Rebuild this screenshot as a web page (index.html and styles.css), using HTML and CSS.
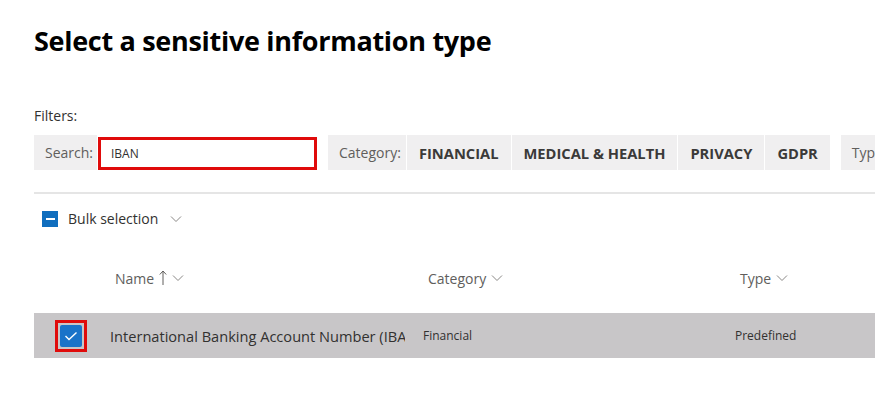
FILE: index.html
```html
<!DOCTYPE html>
<html lang="en">
<head>
    <meta charset="UTF-8">
    <meta name="viewport" content="width=device-width, initial-scale=1.0">
    <title>Select a sensitive information type</title>
    <link rel="stylesheet" href="styles.css">
</head>
<body>
    <div class="container">
        <h1>Select a sensitive information type</h1>

        <div class="filters-label">Filters:</div>
        <div class="filter-bar">
            <div class="filter-group">
                <span class="filter-name search-name">Search:</span>
                <div class="search-box">IBAN</div>
            </div>
            <div class="filter-group">
                <span class="filter-name">Category:</span>
                <span class="chip">FINANCIAL</span>
                <span class="chip">MEDICAL &amp; HEALTH</span>
                <span class="chip">PRIVACY</span>
                <span class="chip">GDPR</span>
            </div>
            <div class="filter-group">
                <span class="filter-name">Type:</span>
            </div>
        </div>

        <div class="bulk">
            <span class="check partial"></span>
            <span>Bulk selection</span>
            <svg class="chev" width="12" height="8" viewBox="0 0 12 8"><path d="M1 1.5 L6 6.5 L11 1.5" fill="none" stroke="#8a8886" stroke-width="1"/></svg>
        </div>

        <div class="grid head">
            <div></div>
            <div class="col">Name
                <svg class="arrow" width="8" height="16" viewBox="0 0 8 16"><path d="M4 1 V15 M0.8 4.5 L4 1 L7.2 4.5" fill="none" stroke="#605e5c" stroke-width="1"/></svg>
                <svg class="chev" width="12" height="8" viewBox="0 0 12 8"><path d="M1 1.5 L6 6.5 L11 1.5" fill="none" stroke="#8a8886" stroke-width="1"/></svg>
            </div>
            <div class="col">Category
                <svg class="chev" width="12" height="8" viewBox="0 0 12 8"><path d="M1 1.5 L6 6.5 L11 1.5" fill="none" stroke="#8a8886" stroke-width="1"/></svg>
            </div>
            <div class="col">Type
                <svg class="chev" width="12" height="8" viewBox="0 0 12 8"><path d="M1 1.5 L6 6.5 L11 1.5" fill="none" stroke="#8a8886" stroke-width="1"/></svg>
            </div>
        </div>

        <div class="grid row selected">
            <div class="check-cell">
                <span class="highlight">
                    <span class="check on">
                        <svg width="14" height="10" viewBox="0 0 14 10"><path d="M1.5 5 L5 8.5 L12.5 1.5" fill="none" stroke="#fff" stroke-width="1.4"/></svg>
                    </span>
                </span>
            </div>
            <div class="name">International Banking Account Number (IBAN)</div>
            <div class="small">Financial</div>
            <div class="small">Predefined</div>
        </div>
    </div>
</body>
</html>
```

FILE: styles.css
```css
body {
    margin: 0;
    font-family: 'Open Sans', 'Noto Sans', sans-serif;
    color: #323130;
    background: #fff;
    overflow: hidden;
}

.container {
    padding: 22px 0 0 34px;
}

h1 {
    margin: 0;
    font-size: 27px;
    font-weight: 700;
    color: #000;
    letter-spacing: -0.3px;
    line-height: 38px;
}

.filters-label {
    margin-top: 46px;
    font-size: 14px;
    line-height: 20px;
}

.filter-bar {
    display: flex;
    gap: 11px;
    margin-top: 9px;
    height: 35px;
    padding-bottom: 22px;
    border-bottom: 2px solid #e5e5e5;
    white-space: nowrap;
}

.filter-group {
    display: flex;
    gap: 1px;
    background: #fff;
}

.filter-name,
.chip {
    display: flex;
    align-items: center;
    background: #f0eff0;
    font-size: 14px;
    color: #605e5c;
    padding: 0 11px;
}

.filter-name {
    padding-right: 5px;
}

.search-name {
    padding-right: 4px;
}

.chip {
    font-weight: 700;
    font-size: 14.7px;
    color: #3b3a39;
    padding: 0 12px;
}

.search-box {
    box-sizing: border-box;
    width: 219px;
    height: 33px;
    margin-top: 2px;
    border: 3px solid #e00b0b;
    background: #fff;
    font-size: 12px;
    line-height: 27px;
    padding-left: 10px;
    color: #323130;
}

.bulk {
    display: flex;
    align-items: center;
    gap: 10px;
    margin-top: 15px;
    padding-left: 8px;
    font-size: 14px;
    color: #323130;
}

.check {
    display: inline-flex;
    align-items: center;
    justify-content: center;
    width: 16px;
    height: 16px;
    background: #106ebe;
}

.check.partial::after {
    content: "";
    width: 9px;
    height: 2px;
    background: #fff;
}

.chev {
    margin-left: 2px;
}

.grid {
    display: grid;
    grid-template-columns: 76px 313px 312px 1fr;
    align-items: center;
}

.head {
    margin-top: 35px;
    height: 30px;
    font-size: 14px;
    color: #605e5c;
}

.head .col {
    padding-left: 5px;
    display: flex;
    align-items: center;
    gap: 3px;
}

.arrow {
    margin-left: 2px;
}

.row {
    margin-top: 20px;
    height: 45px;
    background: #c8c6c8;
}

.check-cell {
    padding-left: 21px;
    display: flex;
    align-items: center;
}

.highlight {
    display: inline-flex;
    padding: 2px;
    border: 3px solid #e00b0b;
}

.check.on {
    width: 22px;
    height: 22px;
    border-radius: 2px;
    background: #1a73c9;
}

.name {
    font-size: 14.6px;
    white-space: nowrap;
    overflow: hidden;
    margin-right: 18px;
}

.small {
    font-size: 12px;
}
```
